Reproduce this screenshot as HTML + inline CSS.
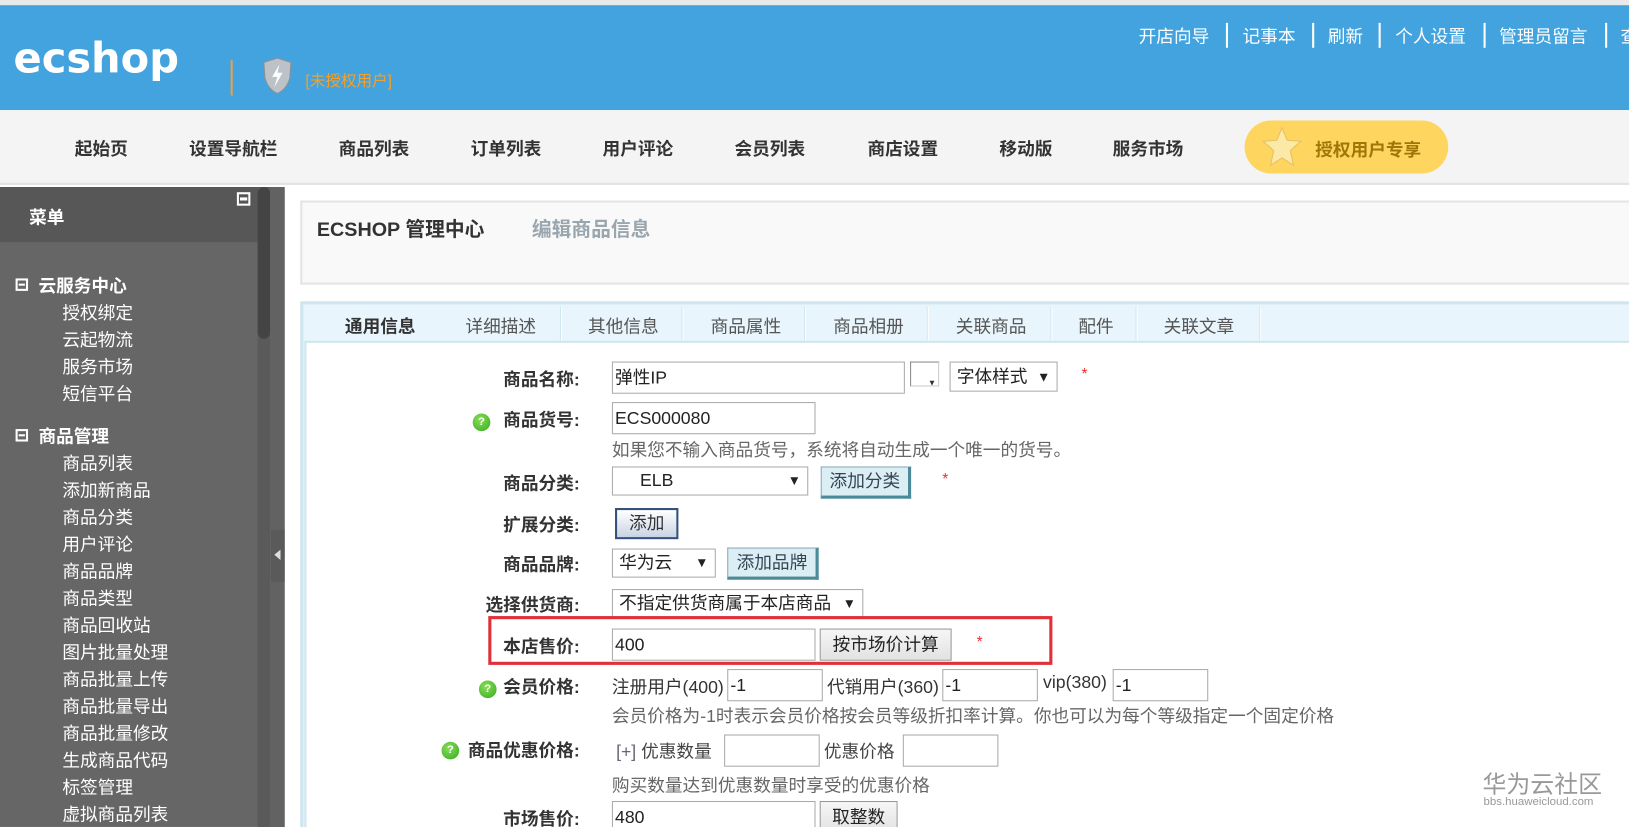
<!DOCTYPE html>
<html><head><meta charset="utf-8"><style>
*{margin:0;padding:0;box-sizing:border-box}
html,body{width:1629px;height:827px;overflow:hidden;background:#fff}
#w{position:absolute;left:0;top:0;width:1568px;height:796px;overflow:hidden;transform:scale(1.0389);transform-origin:0 0;font-family:"Liberation Sans","Noto Sans CJK SC",sans-serif;color:#333}
.a{position:absolute;white-space:nowrap}
.nav{font-size:17px;font-weight:bold;color:#333;top:129px}
.tl{font-size:17px;color:#fff;top:21px}
.sep{position:absolute;top:22px;width:2px;height:24px;background:#fff}
.sb{font-size:17px;color:#fff;left:60px}
.sbh{font-size:17px;color:#fff;font-weight:bold;left:37px}
.box{position:absolute;width:12px;height:12px;border:2px solid #fff;left:15px}
.box:after{content:"";position:absolute;left:1px;top:3px;width:6px;height:2px;background:#fff}
.tab{font-size:17px;color:#555;top:300px}
.tsep{position:absolute;top:295px;width:2px;height:33px;background:#fff;border-left:1px solid #cfe6f0}
.lb{font-size:17px;font-weight:bold;color:#333;text-align:right;right:1010px}
.in{position:absolute;border:1px solid #aaa;background:#fff;font-size:17px;padding-left:2px;height:31px;line-height:29px;color:#222}
.btn{position:absolute;border:1px solid #999;background:linear-gradient(#f6f6f6,#e2e2e2);font-size:17px;text-align:center;height:31px;line-height:29px;color:#222}
.bb{position:absolute;background:#dbeef3;border:1px solid #8ab;border-bottom:3px solid #4a8a9a;border-right:3px solid #4a8a9a;font-size:17px;color:#345;text-align:center;height:31px;line-height:27px}
.hint{font-size:17px;color:#666;left:589px}
.q{position:absolute;width:17px;height:17px;border-radius:50%;background:radial-gradient(circle at 40% 35%,#8d5,#3a2);color:#fff;font-size:11px;font-weight:bold;text-align:center;line-height:17px}
.star{color:#e33;font-size:15px}
.sel:after{content:"▼";position:absolute;right:6px;top:0;font-size:13px}
</style></head><body><div id="w">
<div class="a" style="left:0;top:0;width:1568px;height:5px;background:#e9e9e9"></div>
<div class="a" style="left:0;top:5px;width:1568px;height:101px;background:#42a3de"></div>
<div class="a" style="left:13px;top:34px;font-size:40px;font-weight:bold;color:#fff;font-family:'DejaVu Sans',sans-serif">ecshop</div>
<div class="a" style="left:222px;top:58px;width:2px;height:34px;background:#e6a24a"></div>
<svg class="a" style="left:250px;top:55px" width="34" height="36" viewBox="0 0 34 36"><path d="M4 5 L17 1 L30 5 L29 20 Q26 31 17 35 Q8 31 5 20Z" fill="#bcc2c8" stroke="#8a9299"/><path d="M19 7 L12 19 L17 19 L14 29 L22 15 L17 15Z" fill="#fff"/></svg>
<div class="a" style="left:294px;top:67px;font-size:15px;color:#f5a02a">[未授权用户]</div>
<div class="a tl" style="left:1096px">开店向导</div><div class="sep" style="left:1180px"></div>
<div class="a tl" style="left:1196px">记事本</div><div class="sep" style="left:1263px"></div>
<div class="a tl" style="left:1278px">刷新</div><div class="sep" style="left:1327px"></div>
<div class="a tl" style="left:1343px">个人设置</div><div class="sep" style="left:1428px"></div>
<div class="a tl" style="left:1443px">管理员留言</div><div class="sep" style="left:1545px"></div>
<div class="a tl" style="left:1560px">查</div>
<div class="a" style="left:0;top:106px;width:1568px;height:72px;background:#f4f4f4;border-bottom:2px solid #e2e2e2"></div>
<div class="a nav" style="left:72px">起始页</div>
<div class="a nav" style="left:182px">设置导航栏</div>
<div class="a nav" style="left:326px">商品列表</div>
<div class="a nav" style="left:453px">订单列表</div>
<div class="a nav" style="left:580px">用户评论</div>
<div class="a nav" style="left:707px">会员列表</div>
<div class="a nav" style="left:835px">商店设置</div>
<div class="a nav" style="left:962px">移动版</div>
<div class="a nav" style="left:1071px">服务市场</div>
<div class="a" style="left:1198px;top:116px;width:196px;height:51px;border-radius:26px;background:#fed55f"></div>
<svg class="a" style="left:1214px;top:120px" width="40" height="44" viewBox="0 0 40 44"><path d="M20 3 L25 15 L38 16 L28 25 L31 39 L20 32 L9 39 L12 25 L2 16 L15 15Z" fill="#fbe9a8" stroke="#e8c060"/></svg>
<div class="a" style="left:1266px;top:130px;font-size:17px;font-weight:bold;color:#a07608">授权用户专享</div>
<div class="a" style="left:0;top:180px;width:274px;height:616px;background:#666"></div>
<div class="a" style="left:0;top:180px;width:248px;height:53px;background:#575757"></div>
<div class="a" style="left:28px;top:195px;font-size:17px;font-weight:bold;color:#fff">菜单</div>
<div class="a" style="left:228px;top:185px;width:13px;height:13px;border:2px solid #fff;background:#555"><div style="margin:3px 1px;height:3px;background:#fff"></div></div>
<div class="a" style="left:248px;top:180px;width:12px;height:616px;background:#5a5a5a"></div>
<div class="a" style="left:248px;top:180px;width:12px;height:146px;background:#444;border-radius:6px"></div>
<div class="a" style="left:260px;top:180px;width:14px;height:616px;background:#626262"></div>
<div class="a" style="left:261px;top:510px;width:13px;height:50px;background:#5a5a5a"></div>
<div class="a" style="left:264px;top:529px;width:0;height:0;border-top:5px solid transparent;border-bottom:5px solid transparent;border-right:6px solid #ddd"></div>
<div class="box" style="top:268px"></div><div class="a sbh" style="top:261px">云服务中心</div>
<div class="a sb" style="top:287px">授权绑定</div>
<div class="a sb" style="top:313px">云起物流</div>
<div class="a sb" style="top:339px">服务市场</div>
<div class="a sb" style="top:365px">短信平台</div>
<div class="box" style="top:413px"></div><div class="a sbh" style="top:406px">商品管理</div>
<div class="a sb" style="top:432px">商品列表</div>
<div class="a sb" style="top:458px">添加新商品</div>
<div class="a sb" style="top:484px">商品分类</div>
<div class="a sb" style="top:510px">用户评论</div>
<div class="a sb" style="top:536px">商品品牌</div>
<div class="a sb" style="top:562px">商品类型</div>
<div class="a sb" style="top:588px">商品回收站</div>
<div class="a sb" style="top:614px">图片批量处理</div>
<div class="a sb" style="top:640px">商品批量上传</div>
<div class="a sb" style="top:666px">商品批量导出</div>
<div class="a sb" style="top:692px">商品批量修改</div>
<div class="a sb" style="top:718px">生成商品代码</div>
<div class="a sb" style="top:744px">标签管理</div>
<div class="a sb" style="top:770px">虚拟商品列表</div>
<div class="a" style="left:289px;top:193px;width:1290px;height:81px;background:#f9f9f9;border:2px solid #e4e4e4"></div>
<div class="a" style="left:305px;top:206px;font-size:19px;font-weight:bold;color:#333">ECSHOP 管理中心</div>
<div class="a" style="left:512px;top:206px;font-size:19px;font-weight:bold;color:#9aa6ae">编辑商品信息</div>
<div class="a" style="left:289px;top:290px;width:1290px;height:520px;border:3px solid #cfe6f0;background:#e8f5fc"></div>
<div class="a" style="left:293px;top:328px;width:1290px;height:480px;background:#fff;border-left:2px solid #cfe6f0;border-top:2px solid #cfe6f0"></div>
<div class="a tab" style="left:332px;font-weight:bold;color:#333">通用信息</div>
<div class="a tab" style="left:448px">详细描述</div><div class="tsep" style="left:539px"></div>
<div class="a tab" style="left:566px">其他信息</div><div class="tsep" style="left:656px"></div>
<div class="a tab" style="left:684px">商品属性</div><div class="tsep" style="left:774px"></div>
<div class="a tab" style="left:802px">商品相册</div><div class="tsep" style="left:892px"></div>
<div class="a tab" style="left:920px">关联商品</div><div class="tsep" style="left:1011px"></div>
<div class="a tab" style="left:1038px">配件</div><div class="tsep" style="left:1093px"></div>
<div class="a tab" style="left:1120px">关联文章</div><div class="tsep" style="left:1212px"></div>
<div class="a lb" style="top:351px">商品名称:</div>
<div class="in" style="left:589px;top:348px;width:282px">弹性IP</div>
<div class="a" style="left:876px;top:348px;width:28px;height:24px;border:1px solid #888;border-right-color:#ccc;border-bottom-color:#ccc;background:#fff"><span style="position:absolute;right:2px;bottom:-2px;font-size:8px">▼</span></div>
<div class="in sel" style="left:914px;top:348px;width:104px;height:29px;line-height:27px;padding-left:6px">字体样式</div>
<div class="a star" style="left:1041px;top:352px">*</div>
<div class="q" style="left:455px;top:398px">?</div><div class="a lb" style="top:390px">商品货号:</div>
<div class="in" style="left:589px;top:387px;width:196px">ECS000080</div>
<div class="a hint" style="top:419px">如果您不输入商品货号，系统将自动生成一个唯一的货号。</div>
<div class="a lb" style="top:451px">商品分类:</div>
<div class="in sel" style="left:589px;top:449px;width:189px;height:28px;line-height:26px;padding-left:26px">ELB</div>
<div class="bb" style="left:790px;top:449px;width:87px">添加分类</div>
<div class="a star" style="left:907px;top:453px">*</div>
<div class="a lb" style="top:491px">扩展分类:</div>
<div class="a" style="left:592px;top:489px;width:61px;height:30px;border:2px solid #35507a;background:linear-gradient(#fff,#c8d4e4);font-size:17px;text-align:center;line-height:26px">添加</div>
<div class="a lb" style="top:529px">商品品牌:</div>
<div class="in sel" style="left:589px;top:528px;width:100px;height:28px;line-height:26px;padding-left:6px">华为云</div>
<div class="bb" style="left:700px;top:527px;width:88px">添加品牌</div>
<div class="a lb" style="top:568px">选择供货商:</div>
<div class="in sel" style="left:589px;top:567px;width:242px;height:28px;line-height:26px;padding-left:6px;padding-right:20px">不指定供货商属于本店商品</div>
<div class="a" style="left:470px;top:593px;width:543px;height:47px;border:3px solid #e0303a"></div>
<div class="a lb" style="top:608px">本店售价:</div>
<div class="in" style="left:589px;top:605px;width:196px">400</div>
<div class="btn" style="left:789px;top:605px;width:127px">按市场价计算</div>
<div class="a star" style="left:940px;top:610px">*</div>
<div class="q" style="left:461px;top:655px">?</div><div class="a lb" style="top:647px">会员价格:</div>
<div class="a" style="left:589px;top:647px;font-size:17px;color:#333">注册用户(400)</div>
<div class="in" style="left:700px;top:644px;width:92px">-1</div>
<div class="a" style="left:796px;top:647px;font-size:17px;color:#333">代销用户(360)</div>
<div class="in" style="left:907px;top:644px;width:92px">-1</div>
<div class="a" style="left:1004px;top:647px;font-size:17px;color:#333">vip(380)</div>
<div class="in" style="left:1071px;top:644px;width:92px">-1</div>
<div class="a hint" style="top:675px">会员价格为-1时表示会员价格按会员等级折扣率计算。你也可以为每个等级指定一个固定价格</div>
<div class="q" style="left:425px;top:714px">?</div><div class="a lb" style="top:708px">商品优惠价格:</div>
<div class="a" style="left:593px;top:709px;font-size:17px;color:#444"><span style="color:#667">[+]</span> 优惠数量</div>
<div class="in" style="left:697px;top:707px;width:92px"></div>
<div class="a" style="left:793px;top:709px;font-size:17px;color:#444">优惠价格</div>
<div class="in" style="left:869px;top:707px;width:92px"></div>
<div class="a hint" style="top:742px">购买数量达到优惠数量时享受的优惠价格</div>
<div class="a lb" style="top:774px">市场售价:</div>
<div class="in" style="left:589px;top:771px;width:196px">480</div>
<div class="btn" style="left:789px;top:771px;width:75px">取整数</div>
<div class="a" style="left:1427px;top:736px;font-size:23px;color:#999">华为云社区</div>
<div class="a" style="left:1428px;top:766px;font-size:11px;color:#999">bbs.huaweicloud.com</div>
</div></body></html>
